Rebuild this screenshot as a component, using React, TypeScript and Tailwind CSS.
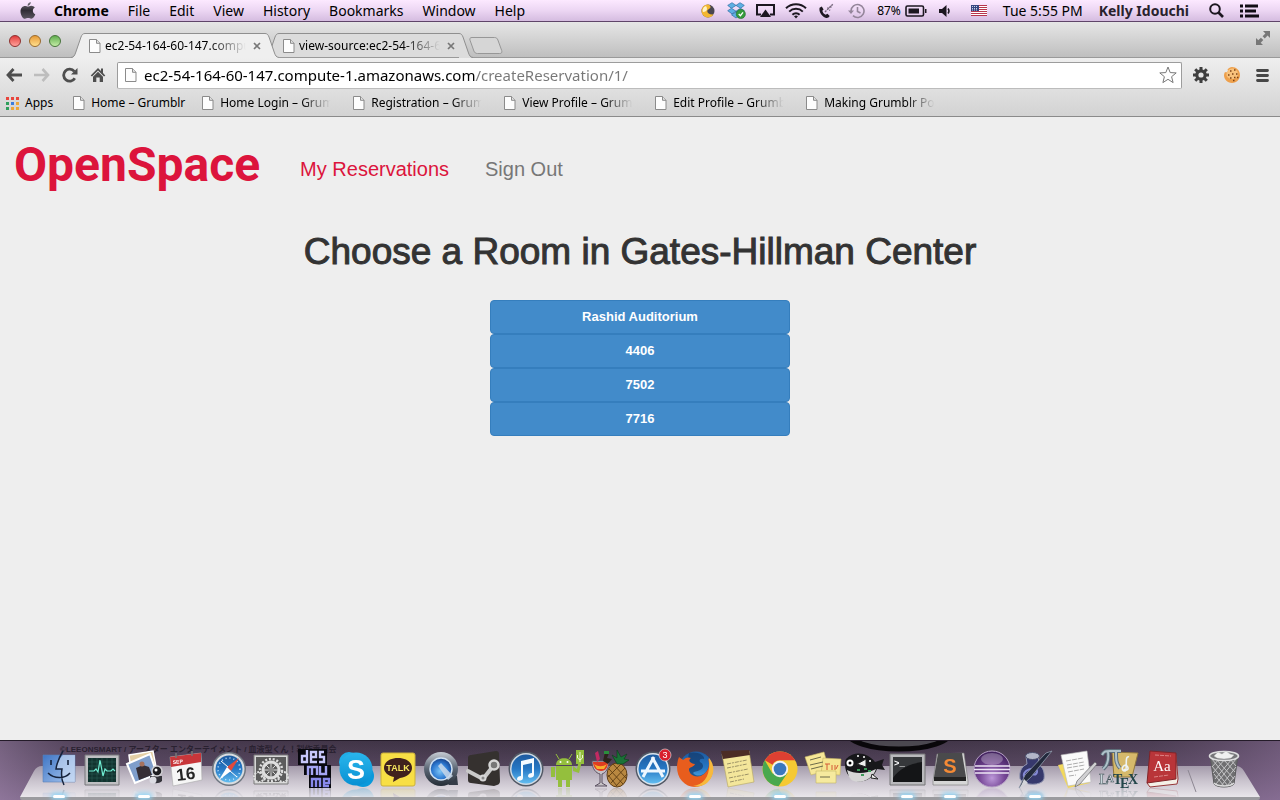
import type { ReactNode } from "react";

const macFont = "font-['Noto_Sans','Open_Sans',sans-serif]";
const fade = "[mask-image:linear-gradient(to_right,black_72%,transparent_98%)]";

/* ---------- small shared drawings ---------- */

function PageIcon() {
  return (
    <svg className="shrink-0" width="12" height="14" viewBox="0 0 12 14" aria-hidden="true">
      <path d="M.5.5h7l3.5 3.6v9.4H.5z" fill="#fdfdfd" stroke="#8b8b8b" />
      <path d="M7.5.5v3.8H11" fill="#e2e2e2" stroke="#8b8b8b" />
    </svg>
  );
}

/* ---------- menu bar ---------- */

function AppleIcon() {
  return (
    <svg width="16" height="19" viewBox="0 0 16 19" aria-hidden="true">
      <defs>
        <linearGradient id="apple" x1="0" y1="0" x2="0" y2="1">
          <stop offset="0" stopColor="#77737c" />
          <stop offset=".5" stopColor="#302d35" />
          <stop offset="1" stopColor="#5a5560" />
        </linearGradient>
      </defs>
      <path
        d="M10.8 1c.1 1.900-1.300 3.700-3.200 3.800C7.400 3 9 1.200 10.800 1zM8 5.600c.8 0 1.700-.8 3.200-.8 1.400 0 2.800.7 3.600 1.800-2.900 1.700-2.400 5.500.5 6.700-.6 1.900-2.200 4.500-4 4.500-1.200 0-1.700-.7-3.200-.7s-2 .7-3.100.7C2.800 17.800.5 13.700.5 10.400.5 7 2.700 4.900 5 4.900c1.300 0 2.300.7 3 .7z"
        fill="url(#apple)"
      />
    </svg>
  );
}

function StatusIcons() {
  return (
    <>
      <svg width="14" height="14" viewBox="0 0 14 14" aria-hidden="true">
        <circle cx="7" cy="7" r="6.500" fill="#4a4650" />
        <path d="M7 .5a6.500 6.500 0 1 0 5.500 10C9 11 6 9.500 6.300 7 6.600 5 9.500 5 9.500 3 9.500 1.500 8 .5 7 .5z" fill="#f4b731" />
        <path d="M5 2C2 3 1 6 2 8c2 0 4-1 4-3 0-1-.3-2-1-3z" fill="#fff3c4" />
      </svg>
      <svg className="ml-3" width="19" height="17" viewBox="0 0 19 17" aria-hidden="true">
        <g fill="#5fb0e4" stroke="#2d6da3" strokeWidth=".7">
          <path d="M5 .7 9 3.400 4.500 6.300.7 3.400zM13 .7l4.300 2.700-3.800 2.900L9 3.400z" />
          <path d="M.7 8.700 4.500 6.300 9 9.200l-4 2.700zM9 9.200l4.500-2.900 3.800 2.400-4.300 3.200z" />
          <path d="M4.500 12.800 9 10l4.500 2.800L9 16z" />
        </g>
        <circle cx="13.800" cy="12" r="4.600" fill="#359b3c" stroke="#236f2b" strokeWidth=".6" />
        <path d="m11.700 12 1.700 1.700 2.600-3.400" fill="none" stroke="#fff" strokeWidth="1.300" />
      </svg>
      <svg className="ml-2.5" width="19" height="14" viewBox="0 0 19 14" aria-hidden="true">
        <path d="M5 10.500H1V1h17v9.500h-4" fill="none" stroke="#1c1720" strokeWidth="2" />
        <path d="M9.500 5.500 15 13H4z" fill="#1c1720" />
      </svg>
      <svg className="ml-2.5" width="22" height="16" viewBox="0 0 22 16" fill="none" stroke="#1c1720" strokeWidth="2" aria-hidden="true">
        <path d="M1 5.200a14.500 14.500 0 0 1 20 0M4.200 8.600a9.800 9.800 0 0 1 13.600 0M7.400 11.800a5.200 5.200 0 0 1 7.200 0" />
        <path d="m9 13.300 2 2.200 2-2.200a3 3 0 0 0-4 0z" fill="#1c1720" stroke="none" />
      </svg>
      <svg className="ml-3" width="15" height="16" viewBox="0 0 15 16" aria-hidden="true">
        <path d="M.6 4.700 2.800 3.600l1.800 2.900-1.300 1.300c.5 1.900 1.500 3.200 3.400 4l1.700-1 2.300 2.300c-.9 1.600-2.400 2.300-4.200 1.700C3 13.600-.4 9 .6 4.700z" fill="#1c1720" />
        <path d="m6 9 8-8M8.500 4.500l2.500 3M11 3l2 2" stroke="#77697e" strokeWidth="1.400" strokeDasharray="2 1" fill="none" />
      </svg>
      <svg className="ml-3.5" width="17" height="16" viewBox="0 0 17 16" fill="none" stroke="#94859a" strokeWidth="1.600" aria-hidden="true">
        <path d="M3 8a6.500 6.500 0 1 1 2 4.700M9.500 4v4.500l3 1.500" />
        <path d="M0 7.500h6L3 11z" fill="#94859a" stroke="none" />
      </svg>
      <span className="ml-3 text-xs">87%</span>
      <svg className="ml-1" width="22" height="12" viewBox="0 0 22 12" aria-hidden="true">
        <rect x="1" y="1" width="17.500" height="10" rx="1.500" fill="none" stroke="#1c1720" strokeWidth="1.600" />
        <path d="M3.500 3.500H14v5H3.500zM20 4h1.500v4H20z" fill="#1c1720" />
      </svg>
      <svg className="ml-3" width="12" height="12" viewBox="0 0 12 12" aria-hidden="true">
        <path d="M0 4h3l4.500-4v12L3 8H0z" fill="#1c1720" />
        <path d="M9 3.500q2 2.500 0 5" fill="none" stroke="#1c1720" strokeWidth="1.500" />
      </svg>
      <svg className="ml-5" width="16" height="11" viewBox="0 0 16 11" aria-hidden="true">
        <path fill="#fff" d="M0 0h16v11H0z" />
        <path d="M0 .5h16M0 2.500h16M0 4.500h16M0 6.500h16M0 8.500h16M0 10.500h16" stroke="#b7354c" />
        <path fill="#34447f" d="M0 0h8v6H0z" />
        <path d="M1 1.500h6M1 3.500h6M1 5h6" stroke="#c8cde6" strokeDasharray="1 1" />
      </svg>
    </>
  );
}

function MenuBar() {
  const menus = ["File", "Edit", "View", "History", "Bookmarks", "Window", "Help"];
  return (
    <header className={`${macFont} flex h-[22px] items-center whitespace-nowrap border-b border-[#5f4569] bg-linear-to-b from-[#fce9ff] via-[#ecd6f3] to-[#d5bce0] pr-5 pl-5 text-sm leading-5 text-black`}>
      <AppleIcon />
      <nav className="ml-[18px] flex items-center gap-[19px]">
        <button className="font-bold">Chrome</button>
        {menus.map((m) => (
          <button key={m}>{m}</button>
        ))}
      </nav>
      <div className="ml-auto flex items-center">
        <StatusIcons />
        <span className="ml-4">Tue 5:55 PM</span>
        <span className="ml-4 font-bold text-[#29222d]">Kelly Idouchi</span>
        <button aria-label="Search" className="ml-5">
          <svg width="15" height="15" viewBox="0 0 15 15" fill="none" stroke="#1c1720" strokeWidth="2">
            <circle cx="6" cy="6" r="4.800" />
            <path d="m9.500 9.500 4.500 4.500" strokeWidth="2.600" />
          </svg>
        </button>
        <button aria-label="Notifications" className="ml-4">
          <svg width="20" height="14" viewBox="0 0 20 14" stroke="#110d14" strokeWidth="2.800">
            <path d="M0 2h3M0 7h3M0 12h3M5 2h13M5 7h11M5 12h14" />
          </svg>
        </button>
      </div>
    </header>
  );
}

/* ---------- browser window ---------- */

function Light({ label, color }: { label: string; color: string }) {
  return <button aria-label={label} className={`size-3 rounded-full border ${color}`} />;
}

function Tab({ title, active }: { title: string; active?: boolean }) {
  const fill = active ? "#efefef" : "#dcdcdc";
  return (
    <div className={active ? "z-10 flex h-[25px]" : "-ml-3.5 flex h-[25px]"}>
      <svg width="14" height="25" viewBox="0 0 14 25" aria-hidden="true">
        <path d="M0 25c3-.5 3.500-2 4.500-4.500L10 4C11 1.500 12 .5 14 .5V25z" fill={fill} />
        <path d="M0 24.500c3-.5 3.500-2 4.500-4.500L10 4C11 1.500 12 .5 14 .5" fill="none" stroke="#8f8f8f" />
      </svg>
      <div
        className={`flex w-[180px] items-center border-t border-t-[#8f8f8f] pl-1 ${active ? "bg-[#efefef]" : "border-b border-b-[#9a9a9a] bg-[#dcdcdc]"}`}
      >
        <PageIcon />
        <span className={`ml-1 w-[144px] overflow-hidden whitespace-nowrap text-xs leading-5 ${fade}`}>{title}</span>
        <button aria-label={`Close ${title}`} className="ml-1">
          <svg width="8" height="8" viewBox="0 0 8 8" stroke="#777" strokeWidth="1.700">
            <path d="m1 1 6 6M7 1 1 7" />
          </svg>
        </button>
      </div>
      <svg width="14" height="25" viewBox="0 0 14 25" aria-hidden="true">
        <path d="M14 25c-3-.5-3.500-2-4.500-4.500L4 4C3 1.500 2 .5 0 .5V25z" fill={fill} />
        <path d="M14 24.500c-3-.5-3.500-2-4.500-4.500L4 4C3 1.500 2 .5 0 .5" fill="none" stroke="#8f8f8f" />
      </svg>
    </div>
  );
}

function TabStrip() {
  return (
    <div className="flex h-9 items-end border-b border-[#9a9a9a] bg-linear-to-b from-[#e6e6e6] to-[#bfbfbf] pr-2.5 pl-[9px]">
      <div className="flex gap-2 self-center pt-0.5">
        <Light label="Close" color="border-[#8f2f2d] bg-linear-to-b from-[#e0383c] to-[#ffa09b]" />
        <Light label="Minimize" color="border-[#9a6a2c] bg-linear-to-b from-[#e69a34] to-[#ffe08c]" />
        <Light label="Zoom" color="border-[#47743a] bg-linear-to-b from-[#5fae4e] to-[#c4eca6]" />
      </div>
      <div className="-mb-px ml-2.5 flex items-end">
        <Tab title="ec2-54-164-60-147.compute" active />
        <Tab title="view-source:ec2-54-164-60-147" />
        <button aria-label="New tab" className="-ml-1 mb-1">
          <svg width="34" height="17" viewBox="0 0 34 17">
            <path d="M3 .5h22.500c2 0 2.800 1 3.400 2.500l3.800 10.500c.6 2-.2 3-2 3H8.500c-2 0-3-1-3.600-2.500L1 3.200C.5 1.500 1 .5 3 .5z" fill="#d6d6d6" stroke="#979797" />
          </svg>
        </button>
      </div>
      <button aria-label="Full screen" className="mb-3 ml-auto">
        <svg width="14" height="14" viewBox="0 0 14 14" fill="#777">
          <path d="M7 0h7v7l-2.400-2.400-2.800 2.800-2.200-2.200 2.800-2.800zM0 7l2.300 2.300 2.600-2.600 2.400 2.400-2.600 2.600L7 14H0z" />
        </svg>
      </button>
    </div>
  );
}

function Toolbar() {
  return (
    <div className="flex h-[34px] items-center pr-[11px] pl-1.5">
      <button aria-label="Back">
        <svg width="16" height="14" viewBox="0 0 16 14" fill="none" stroke="#4e4e4e" strokeWidth="2.800">
          <path d="M7.500 1 2 7l5.500 6M2 7h14" />
        </svg>
      </button>
      <button aria-label="Forward" className="ml-3">
        <svg width="16" height="14" viewBox="0 0 16 14" fill="none" stroke="#bdbdbd" strokeWidth="2.600">
          <path d="m8.500 1 5.500 6-5.500 6M14 7H0" />
        </svg>
      </button>
      <button aria-label="Reload" className="ml-3">
        <svg width="16" height="16" viewBox="0 0 16 16">
          <path d="M12.800 11.300a6 6 0 1 1-.5-7" fill="none" stroke="#4e4e4e" strokeWidth="2.800" />
          <path d="M15.500 1v6.500H9z" fill="#4e4e4e" />
        </svg>
      </button>
      <button aria-label="Home" className="ml-3">
        <svg width="16" height="16" viewBox="0 0 16 16" fill="#4e4e4e">
          <path d="M8 1 .7 8.500l1.300 1 6-6 6 6 1.300-1L13 6V1.500h-2V4z" />
          <path d="m8 4.800 5 5V15H9.700v-4.500H6.300V15H3V9.800z" />
        </svg>
      </button>
      <div className="ml-[11px] flex h-[27px] flex-1 items-center rounded-xs border border-[#9c9c9c] border-b-[#bcbcbc] bg-white pr-1 pl-[7px]">
        <PageIcon />
        <input
          aria-label="Address"
          defaultValue="ec2-54-164-60-147.compute-1.amazonaws.com/createReservation/1/"
          className="ml-[7px] h-6 flex-1 bg-[linear-gradient(to_right,black_332px,#777_332px)] bg-clip-text text-[15px] leading-6 text-transparent caret-black outline-none"
        />
        <button aria-label="Bookmark this page">
          <svg width="18" height="18" viewBox="0 0 18 18">
            <path d="m9 1 2.200 5.600 6 .3-4.600 3.800 1.500 5.900L9 13.300l-5.100 3.300 1.500-5.900L.8 6.900l6-.3z" fill="#fff" stroke="#777" strokeLinejoin="round" />
          </svg>
        </button>
      </div>
      <button aria-label="Settings extension" className="ml-[11px]">
        <svg width="16" height="16" viewBox="-8 -8 16 16">
          <circle r="4.200" fill="none" stroke="#3f3f3f" strokeWidth="3.200" />
          <path d="M0-5v-3M0 5v3M-5 0h-3M5 0h3M3.500-3.500l2.300-2.300M-3.500 3.500l-2.300 2.300M3.500 3.500l2.300 2.300M-3.500-3.500l-2.300-2.300" stroke="#3f3f3f" strokeWidth="3" />
        </svg>
      </button>
      <button aria-label="Cookies extension" className="ml-[15px]">
        <svg width="16" height="16" viewBox="0 0 16 16">
          <path d="M8 0c4 0 8 3 8 8 0 4-3 8-8 8s-8-4-8-8c0-1 .5-2 1-3 .6.4 2 .4 2.500-.3.600-.7.400-1.700 0-2.400C5 1 6 0 8 0z" fill="#eea04c" />
          <path d="M8 1.500c3.500 0 6 2.500 6 5.500s-2.500 5-6 5-6-2.500-5.500-5S5 1.500 8 1.500z" fill="#f8c27c" />
          <path d="M6 4h1.500M10 3h1.500M4 8h1.500M8 7h1.500M12 7h1.500M6 11h1.500M10 10.500h1.500M9 13.500h1.500M13 10.500h1.500" stroke="#7c4316" strokeWidth="1.500" />
        </svg>
      </button>
      <button aria-label="Menu" className="ml-4">
        <svg width="13" height="13" viewBox="0 0 13 13" stroke="#474747" strokeWidth="2.800" strokeLinecap="round">
          <path d="M1.500 1.500h10M1.500 6.500h10M1.500 11.500h10" />
        </svg>
      </button>
    </div>
  );
}

function BookmarkBar() {
  const marks = ["Home Login – Grumblr", "Registration – Grumblr", "View Profile – Grumblr", "Edit Profile – Grumblr", "Making Grumblr Posts"];
  const colors = ["#e8453c", "#e8453c", "#e8453c", "#2e9e5b", "#3b7de0", "#eda63a", "#2e9e5b", "#eda63a", "#eda63a"];
  return (
    <nav className="flex h-[25px] items-center gap-5 border-b border-[#8a8a8a] pb-0.5 pl-1.5 text-xs leading-5 whitespace-nowrap">
      <a href="#apps" className="flex items-center gap-1.5">
        <svg width="13" height="13" viewBox="0 0 13 13" aria-hidden="true">
          {colors.map((c, i) => (
            <rect key={i} x={(i % 3) * 5} y={Math.floor(i / 3) * 5} width="3" height="3" fill={c} />
          ))}
        </svg>
        Apps
      </a>
      <a href="#home" className="flex w-[109px] items-center gap-1.5">
        <PageIcon />
        Home – Grumblr
      </a>
      {marks.map((m) => (
        <a key={m} href="#bookmark" className="flex items-center gap-1.5">
          <PageIcon />
          <span className={`w-[113px] overflow-hidden ${fade}`}>{m}</span>
        </a>
      ))}
    </nav>
  );
}

/* ---------- page ---------- */

function Page() {
  const rooms = ["Rashid Auditorium", "4406", "7502", "7716"];
  return (
    <main className="flex-1 bg-[#eee] font-['Liberation_Sans',Arial,sans-serif]">
      <nav className="flex items-center px-3.5 pt-4">
        <a href="#top" className="font-['Roboto',sans-serif] text-5xl leading-[64px] font-bold text-[#dc143c]">OpenSpace</a>
        <div className="ml-10 flex gap-9 pt-2 text-xl leading-6">
          <a href="#reservations" className="text-[#dc143c]">My Reservations</a>
          <a href="#signout" className="text-[#777]">Sign Out</a>
        </div>
      </nav>
      <h1 className="mt-[35px] text-center text-[37px] leading-10 font-normal text-[#333] [-webkit-text-stroke:1px_#333]">
        Choose a Room in Gates-Hillman Center
      </h1>
      <div className="mx-auto mt-7 flex w-[300px] flex-col">
        {rooms.map((r) => (
          <button key={r} className="rounded-sm border border-[#357ebd] bg-[#428bca] py-1.5 text-[13px] leading-5 font-bold text-white">
            {r}
          </button>
        ))}
      </div>
    </main>
  );
}

/* ---------- dock ---------- */

type DockItem = { name: string; running?: boolean; art: ReactNode };

const sans = "Liberation Sans, Arial, sans-serif";

const dockItems: DockItem[] = [
  {
    name: "Finder",
    running: true,
    art: (
      <>
        <path d="M4 6h32v27H4z" fill="url(#finder)" stroke="#5b7fb5" strokeWidth=".6" />
        <path d="M24 6h12v27H24c-2-4-2-8-2-13h-5c1-6 4-11 7-14z" fill="#dce8f7" opacity=".55" />
        <path d="M24 2c-3 5-6 10-7 18h6c-1 6 0 12 2 16M9 24c6 6 17 6 22 0" fill="none" stroke="#16233c" strokeWidth="1.500" />
        <path d="M12 11v5M29 11v5" stroke="#16233c" strokeWidth="1.600" />
      </>
    ),
  },
  {
    name: "Activity Monitor",
    art: (
      <>
        <path d="M3 6h34v30H3z" fill="#bfbfc2" stroke="#77777a" />
        <path d="M6 9h28v24H6z" fill="#12332f" />
        <path d="M6 13h28M6 17h28M6 25h28M6 29h28M10 9v24M15 9v24M20 9v24M25 9v24M30 9v24" stroke="#2d6059" strokeWidth=".5" />
        <path d="M7 22h5l2-2 2 3 2-12 3 16 2-7 2 2h4l2-2 2 2" fill="none" stroke="#70ecd2" strokeWidth="1.200" />
      </>
    ),
  },
  {
    name: "iPhoto",
    running: true,
    art: (
      <>
        <path d="m5 6 24-4 3 16-25 4z" fill="#e4cfa5" stroke="#fff" strokeWidth="1.500" />
        <path d="m3 15 23-10 7 20-22 9z" fill="#7f9ecb" stroke="#fff" strokeWidth="2" />
        <path d="m12 19 7-3 6 2 3 8-13 5z" fill="#352e35" />
        <circle cx="18" cy="15" r="2.500" fill="#a5715c" />
        <path d="M26 27h12v5c-3 3-9 3-12 0z" fill="#33333a" />
        <circle cx="33" cy="22" r="5" fill="#1c1c20" stroke="#cfcfd3" strokeWidth="1.500" />
        <circle cx="29" cy="31" r="3.500" fill="#dcdce3" />
        <circle cx="32" cy="21" r="1.500" fill="#fff" />
      </>
    ),
  },
  {
    name: "Calendar",
    art: (
      <>
        <path d="m4 8 31-4 1 27-29 6z" fill="#f6f6f6" stroke="#aaa" strokeWidth=".6" />
        <path d="m4 8 31-4v9L5 18z" fill="#c8363a" />
        <path d="M10 4v5M26 2v5" stroke="#777" strokeWidth="1.500" />
        <text x="7" y="15" fontFamily={sans} fontSize="5" fontWeight="700" fill="#fff" transform="rotate(-6 7 15)">SEP</text>
        <text x="11" y="32" fontFamily={sans} fontSize="17" fontWeight="700" fill="#262626" transform="rotate(-7 11 32)">16</text>
      </>
    ),
  },
  {
    name: "Safari",
    art: (
      <>
        <circle cx="20" cy="20" r="17" fill="#6e7680" />
        <circle cx="20" cy="20" r="15.500" fill="#d9dde0" />
        <circle cx="20" cy="20" r="13.500" fill="url(#blue)" />
        <circle cx="20" cy="20" r="11" fill="none" stroke="#c8e7ff" strokeWidth="1.500" strokeDasharray="1 3" />
        <path d="m30 9-8 13-4-4z" fill="#e24a3b" />
        <path d="m10 31 8-13 4 4z" fill="#fff" />
        <path d="m12 12 7 6M28 28l-7-6" stroke="#fff" />
      </>
    ),
  },
  {
    name: "System Preferences",
    art: (
      <>
        <path d="M3 6h34v29H3z" fill="#d6d6d6" stroke="#7a7a7a" />
        <path d="M5 8h30v25H5z" fill="#5c5c5c" />
        <g fill="none" stroke="#dedede">
          <circle cx="20" cy="21" r="8" strokeWidth="3" />
          <circle cx="20" cy="21" r="11" strokeWidth="2.500" strokeDasharray="2 1.800" />
          <path d="M20 13v16M12 21h16M14 15l12 12M26 15 14 27" />
          <circle cx="8" cy="28" r="5" strokeWidth="2" strokeDasharray="2 1" />
          <circle cx="32" cy="28" r="5" strokeWidth="2" strokeDasharray="2 1" />
        </g>
        <circle cx="20" cy="21" r="3" fill="#8d8d8d" />
      </>
    ),
  },
  {
    name: "DeSmuME",
    art: (
      <>
        <path d="M4 0h29v16h4v23H15V26H10V16H4z" fill="#08080e" />
        <g fill="none" strokeWidth="2.400">
          <path stroke="#c7c7fa" d="M13 1v12H8V7h5M23 13h-6V3h5v5h-5M30 3h-4v5h4v5h-5" />
          <path stroke="#a5a5f4" d="M14 26v-8h4v8-8h5v8M26 17v8h6v-8" />
          <path stroke="#8989ec" d="M18 38v-8h4v8-8h4v8M35 37h-5v-7h5v4h-5" />
        </g>
      </>
    ),
  },
  {
    name: "Skype",
    art: (
      <>
        <circle cx="13" cy="13" r="10" fill="#20aee8" />
        <circle cx="27" cy="27" r="11" fill="#0a99db" />
        <circle cx="20" cy="20" r="16.500" fill="url(#skype)" />
        <text x="20" y="30" textAnchor="middle" fontFamily={sans} fontSize="27" fontWeight="700" fill="#fff">S</text>
      </>
    ),
  },
  {
    name: "KakaoTalk",
    art: (
      <>
        <rect x="3" y="4" width="34" height="33" rx="2" fill="#f8df45" stroke="#cbb13c" />
        <path d="M20 9c8 0 14 4 14 10 0 5-5 9-12 10l-7 4 1-5c-6-1-10-5-10-9C6 13 12 9 20 9z" fill="#40211d" />
        <text x="20" y="22" textAnchor="middle" fontFamily={sans} fontSize="9" fontWeight="700" fill="#f9e85f">TALK</text>
      </>
    ),
  },
  {
    name: "QuickTime Player",
    art: (
      <>
        <path d="M28 27h8l1 9h-9l-7-7z" fill="#353d48" />
        <circle cx="20" cy="20" r="17" fill="url(#steel)" />
        <circle cx="20" cy="20" r="11" fill="url(#quick)" stroke="#cfe2f4" strokeWidth="1.500" />
        <path d="m17 17 3-3 12 13-5 4z" fill="#c9d8ea" opacity=".85" />
      </>
    ),
  },
  {
    name: "Steam",
    art: (
      <>
        <path d="m5 9q0-3 3-3l25-4q3 0 3 3l1 27q0 3-3 4l-3 1-23-3q-3 0-3-3z" fill="#35312f" />
        <path d="m5 22 15 8 11-14" stroke="#c9c9c9" strokeWidth="4" strokeLinejoin="round" strokeLinecap="round" fill="none" />
        <circle cx="31" cy="16" r="4.500" fill="#777" stroke="#d6d6d6" strokeWidth="2.500" />
        <circle cx="20" cy="29" r="2.500" fill="#888" stroke="#d6d6d6" strokeWidth="2" />
      </>
    ),
  },
  {
    name: "iTunes",
    art: (
      <>
        <circle cx="20" cy="20" r="17.500" fill="#525965" />
        <circle cx="20" cy="20" r="16" fill="#cfd9e3" />
        <circle cx="20" cy="20" r="14.500" fill="url(#blue)" />
        <path d="m15 12 13-3v17c0 3-6 4-6 1 0-2 2-3 4-3V14l-9 2v13c0 3-6 4-6 1 0-2 2-3 4-3z" fill="#f5fbff" />
      </>
    ),
  },
  {
    name: "Android File Transfer",
    art: (
      <>
        <g fill="#94bf3d">
          <path d="M8 16c0-9 16-9 16 0zM8 17h16v14H8zM3 18h4v10H3zM10 30h4v8h-4zM18 30h4v8h-4z" />
          <path d="m25 17 4 3 2-9 3 1-3 12-6-2zM28 1h8v14h-8z" />
          <path d="m11 10-3-5M21 10l3-5" stroke="#94bf3d" />
        </g>
        <circle cx="12.500" cy="13" r="1" fill="#fff" />
        <circle cx="19.500" cy="13" r="1" fill="#fff" />
        <path d="M32 3v10M29.500 6v3l2.500 2 2.500-2V6" fill="none" stroke="#eef8d3" />
      </>
    ),
  },
  {
    name: "Papaya",
    art: (
      <>
        <path d="M2 12h17c0 8-4 12-7 13v9l5 3H5l5-3v-9C6 24 2 20 2 12z" fill="#c6c2c6" stroke="#5a5060" />
        <path d="M3 13h15c0 5-2 9-7 9s-8-4-8-9z" fill="#df3c21" />
        <path d="M4 15c4 3 9 3 13 0l-3 5H7z" fill="#f6b02e" />
        <path d="m7 13-2-9 3-2 2 8" fill="#c22a62" />
        <path d="m13 12 2-9 4 1-2 5 5 1-4 5z" fill="#2d241c" />
        <path d="M14 2h5v3h-5z" fill="#2a8f3c" />
        <ellipse cx="27" cy="26" rx="10" ry="12" fill="#b98840" stroke="#5e3d13" />
        <path d="m19 20 14 15M18 26l9 11M23 15l13 14M35 19 21 34M31 15 18 28M37 25 26 37" stroke="#5e3d13" strokeWidth=".9" />
        <path d="m27 15-5-9 5 3V1l4 7 6-3-3 5 5 1-6 4z" fill="#1a7237" stroke="#0c3c1a" strokeWidth=".6" />
      </>
    ),
  },
  {
    name: "App Store",
    art: (
      <>
        <circle cx="20" cy="20" r="17.500" fill="#525965" />
        <circle cx="20" cy="20" r="16" fill="#d9e4ee" />
        <circle cx="20" cy="20" r="14.500" fill="url(#blue)" />
        <path d="m21 8-11 20M19 8l11 20M8 22h24" stroke="#eef7ff" strokeWidth="3" fill="none" />
        <circle cx="32" cy="6" r="6" fill="#d91f2c" stroke="#eee" strokeWidth=".6" />
        <text x="32" y="9" textAnchor="middle" fontFamily={sans} fontSize="9" fill="#fff">3</text>
      </>
    ),
  },
  {
    name: "Firefox",
    running: true,
    art: (
      <>
        <circle cx="21" cy="19" r="16.500" fill="url(#blue)" />
        <path d="M14 4c8-2 16 2 15 6-4-1-5 1-4 3 4 2 4 6 0 8-3 2-6 1-7 3 5 6 15 1 16-8 2 9-3 18-11 18-8 1-14-6-12-13z" fill="#123867" opacity=".65" />
        <path d="M4 8c1 1 3 2 4 3 3-3 6-3 8-2-3 2-2 5 4 6-1 3-5 3-6 5 0 7 9 10 15 5 5-4 6-9 4-16 7 8 6 19-2 25-8 6-18 5-24-2C1 26 1 15 4 8z" fill="#e85d1d" />
        <path d="M34 9c7 8 5 19-2 25-4 3-9 4-14 3 11-1 18-10 16-28z" fill="#f7b93d" />
      </>
    ),
  },
  {
    name: "Notes",
    art: (
      <>
        <path d="m4 5 27-3 5 31-26 5z" fill="#f3e69b" stroke="#b6a660" strokeWidth=".6" />
        <path d="m3 2 28-1 1 5-27 4z" fill="#4c2d25" />
        <path d="m9 15 20-4M9 19l20-4M10 24l20-4M11 29l20-4M12 33l14-3" stroke="#867d59" strokeDasharray="4 1 2 1" strokeWidth=".8" />
      </>
    ),
  },
  {
    name: "Google Chrome",
    running: true,
    art: (
      <>
        <circle cx="20" cy="20" r="17.500" fill="#f5c933" />
        <path d="M4.800 11.300A17.500 17.500 0 0 1 35.200 11.300H20a8.700 8.700 0 0 0-7.500 4.400z" fill="#dd4032" />
        <path d="M4.800 11.300a17.500 17.500 0 0 0 13.700 26l9-13.200-15.100.3z" fill="#49a84e" />
        <circle cx="20" cy="20" r="8.200" fill="#f3f3f3" />
        <circle cx="20" cy="20" r="6.300" fill="#3b78bd" />
      </>
    ),
  },
  {
    name: "Stickies",
    art: (
      <>
        <g stroke="#c4b566" strokeWidth=".6">
          <path d="m2 8 19-5 5 18-18 5z" fill="#f6e797" />
          <path d="m20 9 18 1-1 16-19-1z" fill="#f6e58f" />
          <path d="M13 22h20v12H13z" fill="#f6ea9e" />
        </g>
        <path d="m7 11 11-3M7 16l13-3M8 20l12-3M17 28h10" stroke="#6d6b4b" />
        <path d="M24 15v6M22 15h5m2 1v5m3-5v5m3-5-2 4" stroke="#d45a37" />
      </>
    ),
  },
  {
    name: "Fugu",
    art: (
      <>
        <path d="M1 10C10 1 23 4 30 13l9-3-2 6 3 5-8-1C27 34 9 36 4 27 0 23-1 14 1 10z" fill="#17171a" />
        <path d="M2 21c8 4 19 4 29-1-4 13-22 17-27 8z" fill="#d6d6d6" />
        <path d="m12 15 9-5v8zM27 25l6 5-7-1z" fill="#eee" stroke="#222" />
        <circle cx="5" cy="14" r="3.500" fill="#fff" />
        <circle cx="5" cy="14" r="1.500" />
        <path d="M12 7h2m4 1h2m4 4h2" stroke="#fff" strokeWidth="1.500" />
        <path d="M12 21h3m4-1h3m-6 6h3m4-4h3" stroke="#3c9a58" strokeWidth="2" />
      </>
    ),
  },
  {
    name: "Terminal",
    running: true,
    art: (
      <>
        <path d="M3 5h35v31H3z" fill="#b9b9bc" stroke="#747477" />
        <path d="M6 8h29v25H6z" fill="#141517" />
        <path d="M6 8h29v5C22 15 12 20 6 29z" fill="#36383b" />
        <text x="7" y="17" fontFamily="Liberation Mono, monospace" fontSize="9" fontWeight="700" fill="#fff">&gt;_</text>
      </>
    ),
  },
  {
    name: "Sublime Text",
    running: true,
    art: (
      <>
        <path d="m7 5 27-1 4 28v4H3v-4z" fill="#d6d6d6" stroke="#777" strokeWidth=".6" />
        <path d="M8 4h24l4 24v3H4v-3z" fill="#4a4a4c" />
        <path d="M4 28h32v4H4z" fill="#222" />
        <text x="20" y="24" textAnchor="middle" fontFamily={sans} fontSize="20" fontWeight="700" fill="#f58a35">S</text>
      </>
    ),
  },
  {
    name: "Eclipse",
    art: (
      <>
        <circle cx="20" cy="20" r="18" fill="url(#purple)" stroke="#b7a2c6" />
        <path d="M3 17h35M2 20.500h36M3 24h34" stroke="#ede5f5" strokeWidth="1.400" />
        <ellipse cx="20" cy="10" rx="11" ry="6" fill="#fff" opacity=".28" />
      </>
    ),
  },
  {
    name: "Ink Editor",
    running: true,
    art: (
      <>
        <path d="M11 7h13l-1 8c5 3 7 8 6 15-2 7-20 7-24 0-1-7 1-12 7-15z" fill="#36386c" stroke="#9296b1" />
        <ellipse cx="17.500" cy="7" rx="7" ry="3.500" fill="#b3b7c8" stroke="#4b506d" />
        <path d="M10 29c-6-8 13-13 12-6-1 4-6 3-5-1" fill="none" stroke="#8489d6" strokeWidth="2" />
        <path d="M37 2 16 28 4 39l6-13L31 4z" fill="#22293c" stroke="#929cad" strokeWidth=".8" />
        <path d="m9 30 4 4-8 5z" fill="#d4d4da" />
      </>
    ),
  },
  {
    name: "TextEdit",
    art: (
      <>
        <path d="m1 16 27-5 5 23-22 5z" fill="#f2d85c" />
        <path d="m4 6 26-4 4 31-23 4z" fill="#fafafa" stroke="#bbb" strokeWidth=".6" />
        <path d="m9 12 17-3M10 16l17-3M10 19l18-3M11 23l16-3M12 27l7-1" stroke="#999" strokeWidth=".8" strokeDasharray="5 1" />
        <path d="m38 13 2 2-17 20-5 3 2-6z" fill="#d0d0d2" stroke="#67676b" strokeWidth=".7" />
      </>
    ),
  },
  {
    name: "LaTeXiT",
    art: (
      <>
        <path d="m13 3 26 1-6 24H15z" fill="#d6b96b" stroke="#8f763e" />
        <path d="M3 6c2-4 4-4 8-4h11M9 3c1 8-1 14-5 17M17 3c0 7 0 12 4 16" fill="none" stroke="#5d6f7a" strokeWidth="4" />
        <path d="M3 6c2-4 4-4 8-4h11M9 3c1 8-1 14-5 17M17 3c0 7 0 12 4 16" fill="none" stroke="#afc2ca" strokeWidth="2" />
        <path d="M30 8c-5-2-1 13-4 14-5 0-2-8 2-5 3 3-1 6-3 3" fill="none" stroke="#edf3f5" strokeWidth="1.600" />
        <g fontFamily="Liberation Serif, serif" fontWeight="700">
          <text x="0" y="35" fontSize="14" fill="#cad7dc" stroke="#45545a" strokeWidth=".5">L</text>
          <text x="7" y="33" fontSize="11" fill="#cad7dc" stroke="#45545a" strokeWidth=".5">A</text>
          <text x="14" y="35" fontSize="14" fill="#23464a">T</text>
          <text x="21" y="39" fontSize="14" fill="#23464a">E</text>
          <text x="29" y="35" fontSize="14" fill="#23464a">X</text>
        </g>
      </>
    ),
  },
  {
    name: "Dictionary",
    art: (
      <>
        <path d="m5 34 3 4 27-3 1-5-2-24z" fill="#f4f0e7" stroke="#963638" />
        <path d="m8 2 26 2v26L5 34z" fill="#b93539" stroke="#802428" />
        <text x="20" y="22" textAnchor="middle" fontFamily="Liberation Serif, serif" fontSize="15" fill="#fff">Aa</text>
        <path d="m13 6 16 1M12 28l15-2" stroke="#dc8586" strokeDasharray="4 1" />
      </>
    ),
  },
];

function DockIcon({ name, running, art }: DockItem) {
  return (
    <button aria-label={name} className="relative flex h-full min-w-0 flex-1 justify-center pt-[9px]">
      <svg
        className="h-10 w-10 shrink-0 overflow-visible [-webkit-box-reflect:below_-3px_linear-gradient(transparent_60%,rgba(0,0,0,0.25))]"
        viewBox="0 0 40 40"
      >
        {art}
      </svg>
      {running && <span className="absolute bottom-0.5 z-20 h-[3px] w-3 rounded-full bg-white shadow-[0_0_5px_2px_#8fd4f5]" />}
    </button>
  );
}

function Dock() {
  return (
    <footer className="relative h-[60px] overflow-hidden bg-linear-to-b from-[#3c3142] via-[#584860] to-[#7d6789]">
      <svg className="absolute inset-0 h-full w-full" viewBox="0 0 1280 60" preserveAspectRatio="none" aria-hidden="true">
        <defs>
          <linearGradient id="sides" x1="0" x2="1" y1="0" y2="0">
            <stop offset="0" stopColor="#9a80a6" stopOpacity=".6" />
            <stop offset=".08" stopColor="#6d5878" stopOpacity=".3" />
            <stop offset=".5" stopColor="#3c3344" stopOpacity="0" />
            <stop offset=".9" stopColor="#6d5878" stopOpacity=".3" />
            <stop offset="1" stopColor="#8c7199" stopOpacity=".6" />
          </linearGradient>
          <linearGradient id="shelf" x1="0" x2="0" y1="0" y2="1">
            <stop offset="0" stopColor="#a49bab" />
            <stop offset=".5" stopColor="#cbc5cf" />
            <stop offset="1" stopColor="#e9e6eb" />
          </linearGradient>
          <linearGradient id="finder" x1="0" x2="1" y1="0" y2="1">
            <stop offset="0" stopColor="#3f76c6" />
            <stop offset="1" stopColor="#a9c7ef" />
          </linearGradient>
          <linearGradient id="blue" x1="0" x2="0" y1="0" y2="1">
            <stop offset="0" stopColor="#1d5a9f" />
            <stop offset=".5" stopColor="#2678c5" />
            <stop offset="1" stopColor="#62bdf0" />
          </linearGradient>
          <radialGradient id="quick" cx=".45" cy=".6" r=".6">
            <stop offset="0" stopColor="#7cc4f7" />
            <stop offset=".6" stopColor="#2c78d0" />
            <stop offset="1" stopColor="#163f86" />
          </radialGradient>
          <linearGradient id="skype" x1="0" x2="0" y1="0" y2="1">
            <stop offset="0" stopColor="#2ab6ec" />
            <stop offset="1" stopColor="#0790d3" />
          </linearGradient>
          <linearGradient id="steel" x1="0" x2="0" y1="0" y2="1">
            <stop offset="0" stopColor="#c6ccd4" />
            <stop offset=".5" stopColor="#5b6674" />
            <stop offset="1" stopColor="#262e38" />
          </linearGradient>
          <radialGradient id="purple" cx=".5" cy=".75" r=".7">
            <stop offset="0" stopColor="#bc98d9" />
            <stop offset=".5" stopColor="#764796" />
            <stop offset="1" stopColor="#432360" />
          </radialGradient>
        </defs>
        <path d="M0 0h1280v60H0z" fill="url(#sides)" />
        <ellipse cx="899" cy="-8" rx="52" ry="17" fill="#4b4850" stroke="#09070a" strokeWidth="5" />
        <path d="M0 0h1280v1H0z" fill="#241b29" />
        <path d="M42 26H1236q5 0 8 5l16 26H20l14-26q3-5 8-5z" fill="url(#shelf)" />
      </svg>
      <p className="absolute top-0.5 left-[60px] font-['Liberation_Sans','Noto_Sans_CJK_JP',sans-serif] text-[8px] leading-4 font-bold whitespace-nowrap text-[#292130]">
        ©LEEONSMART / アースター エンターテイメント / 血液型くん！製作委員会
      </p>
      <div className="absolute right-5 bottom-0 left-5 z-10 h-[3px] rounded-b-xs bg-[#9b9b9f]" />
      <nav className="relative flex h-full pr-[35px] pl-[38px]">
        {dockItems.map((d) => (
          <DockIcon key={d.name} {...d} />
        ))}
        <svg className="w-5 shrink-0" viewBox="0 0 20 60" aria-hidden="true">
          <path d="m5 30 8 22" stroke="#8d8792" />
        </svg>
        <button aria-label="Trash" className="flex w-[42px] shrink-0 justify-center pt-[9px]">
          <svg width="40" height="40" viewBox="0 0 40 40">
            <path d="m6 6 4 29c3 4 17 4 20 0l4-29z" fill="#6f6f71" stroke="#5b5b5d" />
            <path d="m8 10 20 25M12 10l18 20M19 10l12 13M26 10l6 7M8 17l16 20M10 25l10 12M32 10 12 35M28 10 11 30M21 10 9 24M15 10 8 18M32 18 17 37M31 27l-8 10" stroke="#c4c4c6" strokeWidth="1" />
            <ellipse cx="20" cy="7" rx="14.500" ry="4.500" fill="#77777a" stroke="#dededf" strokeWidth="1.600" />
            <path d="m10 7 4-4 4 2 4-3 4 3 4 1-3 3-7 1-7-1z" fill="#f0f0f0" stroke="#bbb" strokeWidth=".5" />
            <path d="M10 34c4 4 16 4 20 0" fill="none" stroke="#ddd" strokeWidth="1.500" />
          </svg>
        </button>
      </nav>
    </footer>
  );
}

export default function App() {
  return (
    <div className="flex min-h-screen flex-col overflow-x-hidden">
      <MenuBar />
      <div className={`${macFont} text-black`}>
        <TabStrip />
        <div className="bg-linear-to-b from-[#efefef] to-[#d2d2d2]">
          <Toolbar />
          <BookmarkBar />
        </div>
      </div>
      <Page />
      <Dock />
    </div>
  );
}
